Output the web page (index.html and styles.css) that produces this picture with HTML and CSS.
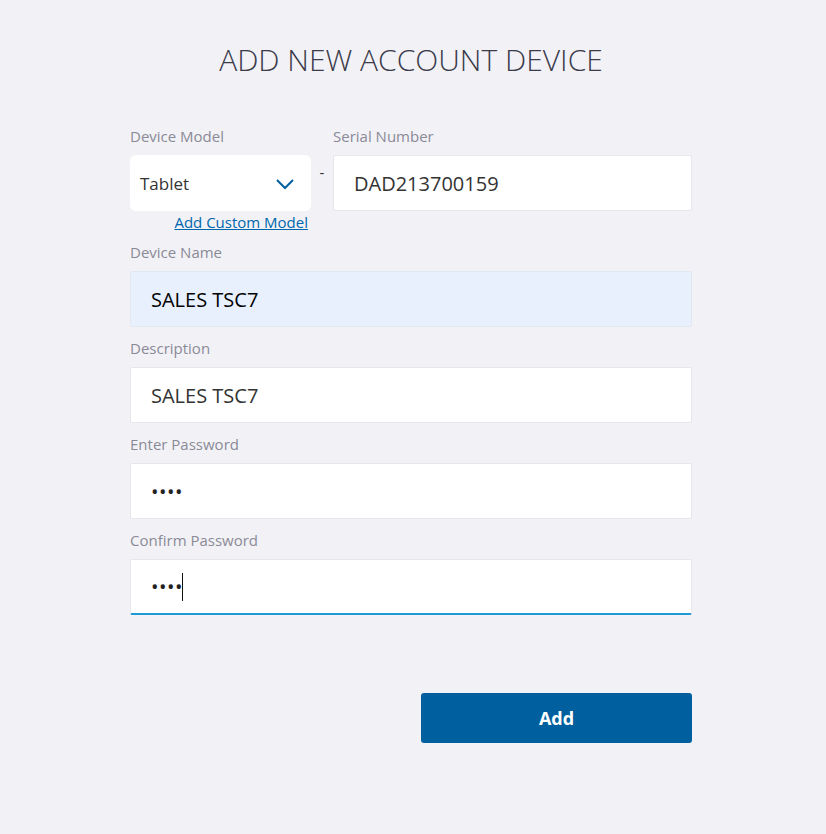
FILE: index.html
```html
<!DOCTYPE html>
<html lang="en">
<head>
<meta charset="utf-8">
<title>Add New Account Device</title>
<link rel="stylesheet" href="styles.css">
</head>
<body>
<main class="page">
  <h1 class="title">ADD NEW ACCOUNT DEVICE</h1>
  <form class="form">
    <div class="row">
      <div class="col-model">
        <label class="label">Device Model</label>
        <div class="select">
          <span>Tablet</span>
          <svg class="chev" width="20" height="12" viewBox="0 0 20 12"><path d="M2 2 L10 10 L18 2" fill="none" stroke="#005f9e" stroke-width="2"/></svg>
        </div>
        <a class="link" href="#">Add Custom Model</a>
      </div>
      <span class="dash">-</span>
      <div class="col-serial">
        <label class="label">Serial Number</label>
        <div class="input">DAD213700159</div>
      </div>
    </div>
    <div class="field">
      <label class="label">Device Name</label>
      <div class="input autofill">SALES TSC7</div>
    </div>
    <div class="field">
      <label class="label">Description</label>
      <div class="input">SALES TSC7</div>
    </div>
    <div class="field">
      <label class="label">Enter Password</label>
      <div class="input pw">••••</div>
    </div>
    <div class="field">
      <label class="label">Confirm Password</label>
      <div class="input pw focus">••••<span class="caret"></span></div>
    </div>
    <div class="actions">
      <button type="button" class="btn">Add</button>
    </div>
  </form>
</main>
</body>
</html>
```
FILE: styles.css
```css
html, body {
  margin: 0;
  padding: 0;
  background: #f2f2f6;
  font-family: "Open Sans", "Noto Sans", sans-serif;
}
.page {
  width: 562px;
  margin: 0 0 0 130px;
  padding-top: 40px;
}
.title {
  margin: 0 0 46px;
  text-align: center;
  font-weight: 300;
  font-size: 30px;
  line-height: 40px;
  color: #3b3b4b;
  letter-spacing: 0;
}
.form {
  display: flex;
  flex-direction: column;
}
.label {
  display: block;
  font-size: 15px;
  line-height: 20px;
  color: #8a8a96;
  margin-bottom: 9px;
}
.row {
  display: flex;
  align-items: flex-start;
  margin-bottom: 10px;
}
.col-model {
  width: 181px;
  display: flex;
  flex-direction: column;
}
.col-serial {
  flex: 1;
}
.dash {
  width: 22px;
  text-align: center;
  padding-top: 36px;
  font-size: 15px;
  color: #333;
  line-height: 20px;
}
.select {
  height: 56px;
  box-sizing: border-box;
  background: #fff;
  border-radius: 6px;
  display: flex;
  align-items: center;
  justify-content: space-between;
  padding: 0 16px 0 10px;
  font-size: 17px;
  color: #333;
}
.chev { margin-top: 2px; }
.link {
  align-self: flex-end;
  margin-right: 3px;
  margin-top: 1px;
  font-size: 15px;
  line-height: 20px;
  color: #0067ac;
  text-decoration: underline;
}
.input {
  height: 56px;
  box-sizing: border-box;
  background: #fff;
  border: 1px solid #e6e6ec;
  border-radius: 2px;
  padding: 0 20px;
  display: flex;
  align-items: center;
  font-size: 20px;
  color: #333;
}
.autofill {
  background: #e8f0fe;
  border-color: #e2e8f2;
  color: #000;
}
.field {
  margin-bottom: 11px;
}
.pw {
  font-size: 20px;
  letter-spacing: 0.5px;
  color: #222;
}
.focus {
  border-bottom: 2px solid #1e9ad6;
}
.caret {
  display: inline-block;
  width: 1px;
  height: 28px;
  background: #111;
  margin-left: -1px;
}
.actions {
  display: flex;
  justify-content: flex-end;
  margin-top: 67px;
}
.btn {
  width: 271px;
  height: 50px;
  border: none;
  border-radius: 3px;
  background: #005f9e;
  color: #fff;
  font-family: "Open Sans", "Noto Sans", sans-serif;
  font-size: 18px;
  font-weight: 700;
}
```
